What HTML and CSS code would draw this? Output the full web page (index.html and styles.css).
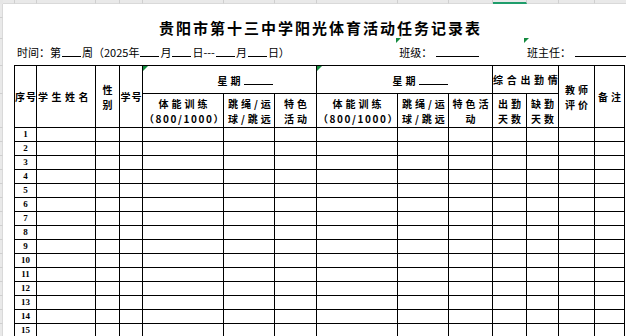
FILE: index.html
```html
<!DOCTYPE html>
<html lang="zh-CN">
<head>
<meta charset="utf-8">
<title>贵阳市第十三中学阳光体育活动任务记录表</title>
<link rel="stylesheet" href="styles.css">
</head>
<body>
<div class="app">
  <div class="corner"></div>
  <div class="colbar">
    <span class="w12"></span><span class="w22"></span><span class="w59"></span><span class="w24"></span><span class="w23"></span><span class="w81"></span><span class="w51"></span><span class="w42"></span><span class="w81"></span><span class="w51"></span><span class="w44"></span><span class="w34 sel"></span><span class="w32"></span><span class="w36"></span><span class="rest"></span>
  </div>
  <div class="rowbar">
    <span class="h14"></span><span class="h21"></span><span class="h27"></span><span class="h28"></span><span class="h34"></span>
    <span class="h14"></span><span class="h14"></span><span class="h14"></span><span class="h14"></span><span class="h14"></span><span class="h14"></span><span class="h14"></span><span class="h14"></span><span class="h14"></span><span class="h14"></span><span class="h14"></span><span class="h14"></span><span class="h14"></span><span class="h14"></span><span class="h14"></span>
  </div>
  <div class="sheet">
    <h1 class="title">贵阳市第十三中学阳光体育活动任务记录表</h1>
    <div class="info">
      <div class="seg seg1">时间：第<span class="blank b19"></span>周（2025年<span class="blank b19"></span>月<span class="blank b19"></span>日---<span class="blank b19"></span>月<span class="blank b19"></span>日）</div>
      <div class="seg seg2"><i class="tri"></i>班级：<span class="blank b43"></span></div>
      <div class="seg seg3"><i class="tri"></i>班主任：<span class="blank b51"></span></div>
    </div>
    <div class="grid">
      <div class="h r2 ls1"><span class="t">序号</span></div>
      <div class="h r2 name"><span class="t">学生姓名</span></div>
      <div class="h r2"><span class="t">性<br>别</span></div>
      <div class="h r2 ls1"><span class="t">学号</span></div>
      <div class="h c3 wk"><i class="tri"></i><span class="t">星期<span class="blank b29"></span></span></div>
      <div class="h c3 wk"><i class="tri"></i><span class="t">星期<span class="blank b29"></span></span></div>
      <div class="h c2 att"><span class="t">综合出勤情</span></div>
      <div class="h r2"><span class="t">教师<br>评价</span></div>
      <div class="h r2"><span class="t">备注</span></div>

      <div class="h"><span class="t">体能训练<br><span class="nar">（800/1000）</span></span></div>
      <div class="h lt"><span class="t">跳绳/运<br>球/跳远</span></div>
      <div class="h"><span class="t">特色<br>活动</span></div>
      <div class="h"><span class="t">体能训练<br><span class="nar">（800/1000）</span></span></div>
      <div class="h lt"><span class="t">跳绳/运<br>球/跳远</span></div>
      <div class="h"><span class="t">特色活<br>动</span></div>
      <div class="h"><span class="t">出勤<br>天数</span></div>
      <div class="h"><span class="t">缺勤<br>天数</span></div>

      <span class="n">1</span><span></span><span></span><span></span><span></span><span></span><span></span><span></span><span></span><span></span><span></span><span></span><span></span><span></span>
      <span class="n">2</span><span></span><span></span><span></span><span></span><span></span><span></span><span></span><span></span><span></span><span></span><span></span><span></span><span></span>
      <span class="n">3</span><span></span><span></span><span></span><span></span><span></span><span></span><span></span><span></span><span></span><span></span><span></span><span></span><span></span>
      <span class="n">4</span><span></span><span></span><span></span><span></span><span></span><span></span><span></span><span></span><span></span><span></span><span></span><span></span><span></span>
      <span class="n">5</span><span></span><span></span><span></span><span></span><span></span><span></span><span></span><span></span><span></span><span></span><span></span><span></span><span></span>
      <span class="n">6</span><span></span><span></span><span></span><span></span><span></span><span></span><span></span><span></span><span></span><span></span><span></span><span></span><span></span>
      <span class="n">7</span><span></span><span></span><span></span><span></span><span></span><span></span><span></span><span></span><span></span><span></span><span></span><span></span><span></span>
      <span class="n">8</span><span></span><span></span><span></span><span></span><span></span><span></span><span></span><span></span><span></span><span></span><span></span><span></span><span></span>
      <span class="n">9</span><span></span><span></span><span></span><span></span><span></span><span></span><span></span><span></span><span></span><span></span><span></span><span></span><span></span>
      <span class="n">10</span><span></span><span></span><span></span><span></span><span></span><span></span><span></span><span></span><span></span><span></span><span></span><span></span><span></span>
      <span class="n">11</span><span></span><span></span><span></span><span></span><span></span><span></span><span></span><span></span><span></span><span></span><span></span><span></span><span></span>
      <span class="n">12</span><span></span><span></span><span></span><span></span><span></span><span></span><span></span><span></span><span></span><span></span><span></span><span></span><span></span>
      <span class="n">13</span><span></span><span></span><span></span><span></span><span></span><span></span><span></span><span></span><span></span><span></span><span></span><span></span><span></span>
      <span class="n">14</span><span></span><span></span><span></span><span></span><span></span><span></span><span></span><span></span><span></span><span></span><span></span><span></span><span></span>
      <span class="n">15</span><span></span><span></span><span></span><span></span><span></span><span></span><span></span><span></span><span></span><span></span><span></span><span></span><span></span>
    </div>
  </div>
</div>
</body>
</html>
```
FILE: styles.css
```css
* { box-sizing: border-box; }
html, body { margin: 0; padding: 0; }
body {
  width: 626px;
  height: 336px;
  overflow: hidden;
  background: #fff;
  color: #000;
  font-family: "Noto Sans CJK SC", "Noto Sans", sans-serif;
}
.app {
  display: grid;
  grid-template-columns: 3px 623px;
  grid-template-rows: 4px 332px;
  height: 336px;
}
.corner { background: #e6e6e6; }
.colbar { display: flex; background: #e9e9e9; }
.colbar span { flex: none; height: 4px; border-right: 1px solid #cfcfcf; border-bottom: 1px solid #d9d9d9; }
.colbar .sel { border-bottom: 2px solid #1f9d6b; }
.colbar .rest { flex: 1; border-right: 0; }
.w12 { width: 12px; } .w22 { width: 22px; } .w59 { width: 59px; } .w24 { width: 24px; }
.w23 { width: 23px; } .w81 { width: 81px; } .w51 { width: 51px; } .w42 { width: 42px; }
.w44 { width: 44px; } .w34 { width: 34px; } .w32 { width: 32px; } .w36 { width: 36px; }
.rowbar { display: flex; flex-direction: column; background: #e9e9e9; overflow: hidden; }
.rowbar span { flex: none; width: 3px; border-bottom: 1px solid #cfcfcf; border-right: 1px solid #d9d9d9; }
.h14 { height: 14px; } .h21 { height: 21px; } .h27 { height: 27px; } .h28 { height: 28px; } .h34 { height: 34px; }

.sheet { padding-left: 11px; overflow: hidden; }
.title {
  margin: 0;
  width: 611px;
  height: 34px;
  padding-top: 14px;
  padding-left: 2px;
  font-size: 15px;
  line-height: 20px;
  font-weight: 700;
  letter-spacing: 2px;
  text-align: center;
  white-space: nowrap;
}
.info { display: flex; height: 27px; font-size: 11px; line-height: 16px; white-space: nowrap; }
.seg { position: relative; padding-top: 6px; padding-left: 3px; }
.seg1 { width: 383px; }
.seg2 { width: 128px; }
.seg3 { flex: 1; }
.tri {
  position: absolute;
  left: 0;
  top: 0;
  width: 0;
  height: 0;
  border-top: 5px solid #138a3e;
  border-right: 5px solid transparent;
}
.blank { display: inline-block; height: 0; border-bottom: 1px solid #000; vertical-align: baseline; }
.b19 { width: 19px; margin: 0 1px; }
.b29 { width: 29px; }
.b43 { width: 43px; margin-left: 4px; }
.b51 { width: 51px; margin-left: 4px; }

.grid {
  display: grid;
  grid-template-columns: 22px 59px 24px 23px 81px 51px 42px 81px 51px 44px 34px 32px 36px 30px;
  grid-template-rows: 28px 34px repeat(15, 14px);
  width: 611px;
  border-left: 1px solid #000;
  border-top: 1px solid #000;
}
.grid > * { border-right: 1px solid #000; border-bottom: 1px solid #000; }
.h {
  position: relative;
  display: flex;
  align-items: center;
  justify-content: center;
  text-align: center;
  padding-left: 3px;
  font-size: 10px;
  line-height: 15px;
  font-weight: 700;
  letter-spacing: 3px;
  white-space: nowrap;
}
.t { display: block; flex: none; }
.r2 { grid-row: span 2; }
.c2 { grid-column: span 2; }
.c3 { grid-column: span 3; }
.ls1 { letter-spacing: 1px; padding-left: 1px; }
.name { justify-content: flex-start; padding-left: 1px; letter-spacing: 3.5px; }
.att { justify-content: flex-start; padding-left: 0; letter-spacing: 3.7px; }
.wk { padding-left: 31px; padding-top: 2px; }
.lt { justify-content: flex-start; text-align: left; padding-left: 4px; }
.nar { letter-spacing: 1.6px; }
.n {
  display: flex;
  align-items: center;
  justify-content: center;
  font-family: "Liberation Serif", serif;
  font-weight: 700;
  font-size: 9px;
  line-height: 1;
}
```
